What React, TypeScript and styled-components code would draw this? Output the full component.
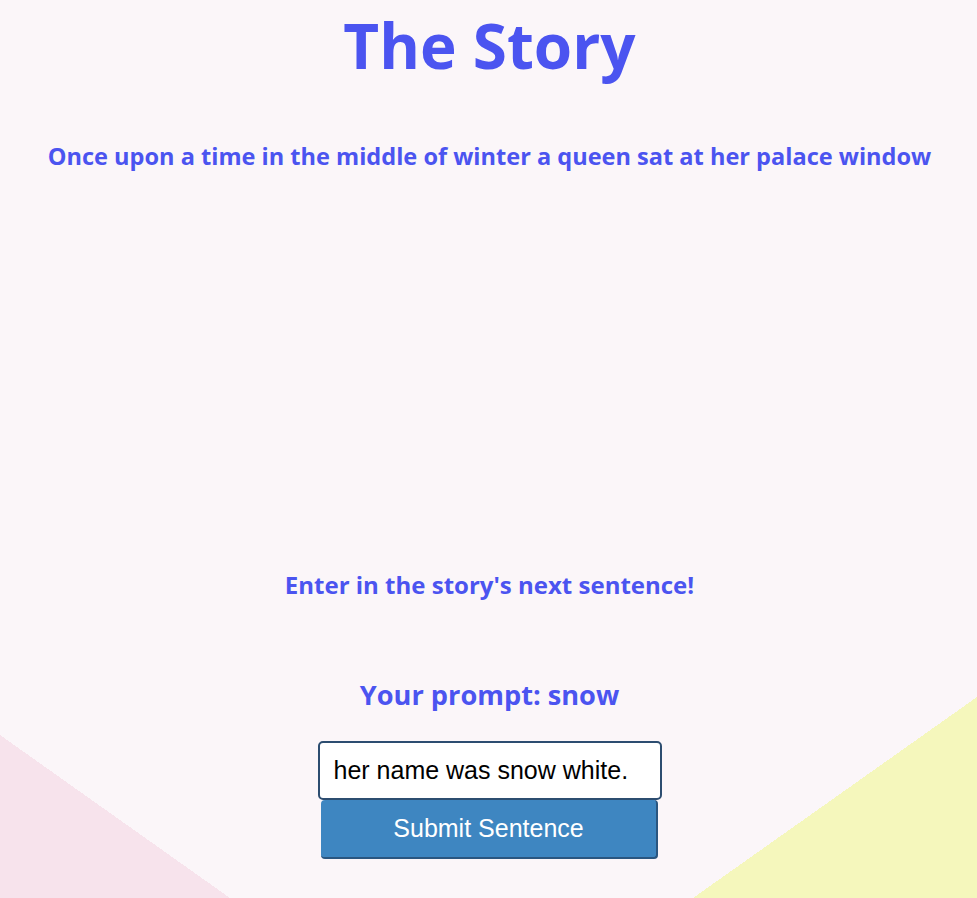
import React, { useState } from "react";
import styled, { createGlobalStyle } from "styled-components";

const GlobalStyle = createGlobalStyle`
  html, body {
    margin: 0;
    padding: 0;
  }
  body {
    min-height: 100vh;
    background-color: #fbf6f9;
    background-image:
      linear-gradient(to top right, #f7e3ec 50%, rgba(247, 227, 236, 0) 50%),
      linear-gradient(to top left, #f5f7bc 50%, rgba(245, 247, 188, 0) 50%);
    background-repeat: no-repeat;
    background-size: 230px 163px, 284px 201px;
    background-position: left bottom, right bottom;
    background-attachment: fixed;
  }
`;

const Page = styled.main`
  display: flex;
  flex-direction: column;
  align-items: center;
  padding-left: 2px;
  font-family: "Open Sans", "Noto Sans", sans-serif;
  color: #4b54f0;
  text-align: center;
`;

const Title = styled.h1`
  margin: 8px 0 0;
  font-size: 62px;
  font-weight: 700;
  line-height: 1.2;
`;

const StoryText = styled.h3`
  margin: 60px 0 0;
  font-size: 23.55px;
  font-weight: 700;
  line-height: 1.2;
`;

const Spacer = styled.div`
  height: 400px;
`;

const Instruction = styled.h3`
  margin: 0;
  font-size: 24px;
  font-weight: 700;
  line-height: 1.2;
`;

const Prompt = styled.h2`
  margin: 80px 0 0;
  font-size: 27.2px;
  font-weight: 700;
  line-height: 1.2;
`;

const Form = styled.form`
  display: flex;
  flex-direction: column;
  align-items: center;
  margin-top: 29px;
`;

const SentenceInput = styled.input`
  box-sizing: border-box;
  width: 344px;
  height: 59px;
  padding: 0 14px;
  border: 2px solid #2c4d70;
  border-radius: 5px;
  background: #ffffff;
  font-family: "Liberation Sans", Arial, sans-serif;
  font-size: 25px;
  color: #000000;
  outline: none;
`;

const SubmitButton = styled.button`
  box-sizing: border-box;
  width: 337px;
  height: 59px;
  margin-top: 0;
  border: none;
  border-right: 2px solid #2a5680;
  border-bottom: 2px solid #2a5680;
  border-radius: 4px;
  background: #3e86c1;
  color: #ffffff;
  font-family: "Liberation Sans", Arial, sans-serif;
  font-size: 25px;
  cursor: pointer;
`;

export default function App() {
  const [value, setValue] = useState("her name was snow white.");
  return (
    <>
      <GlobalStyle />
      <Page>
        <Title>The Story</Title>
        <StoryText>
          Once upon a time in the middle of winter a queen sat at her palace window
        </StoryText>
        <Spacer />
        <Instruction>Enter in the story's next sentence!</Instruction>
        <Prompt>Your prompt: snow</Prompt>
        <Form onSubmit={(e) => e.preventDefault()}>
          <SentenceInput value={value} onChange={(e) => setValue(e.target.value)} />
          <SubmitButton type="submit">Submit Sentence</SubmitButton>
        </Form>
      </Page>
    </>
  );
}
